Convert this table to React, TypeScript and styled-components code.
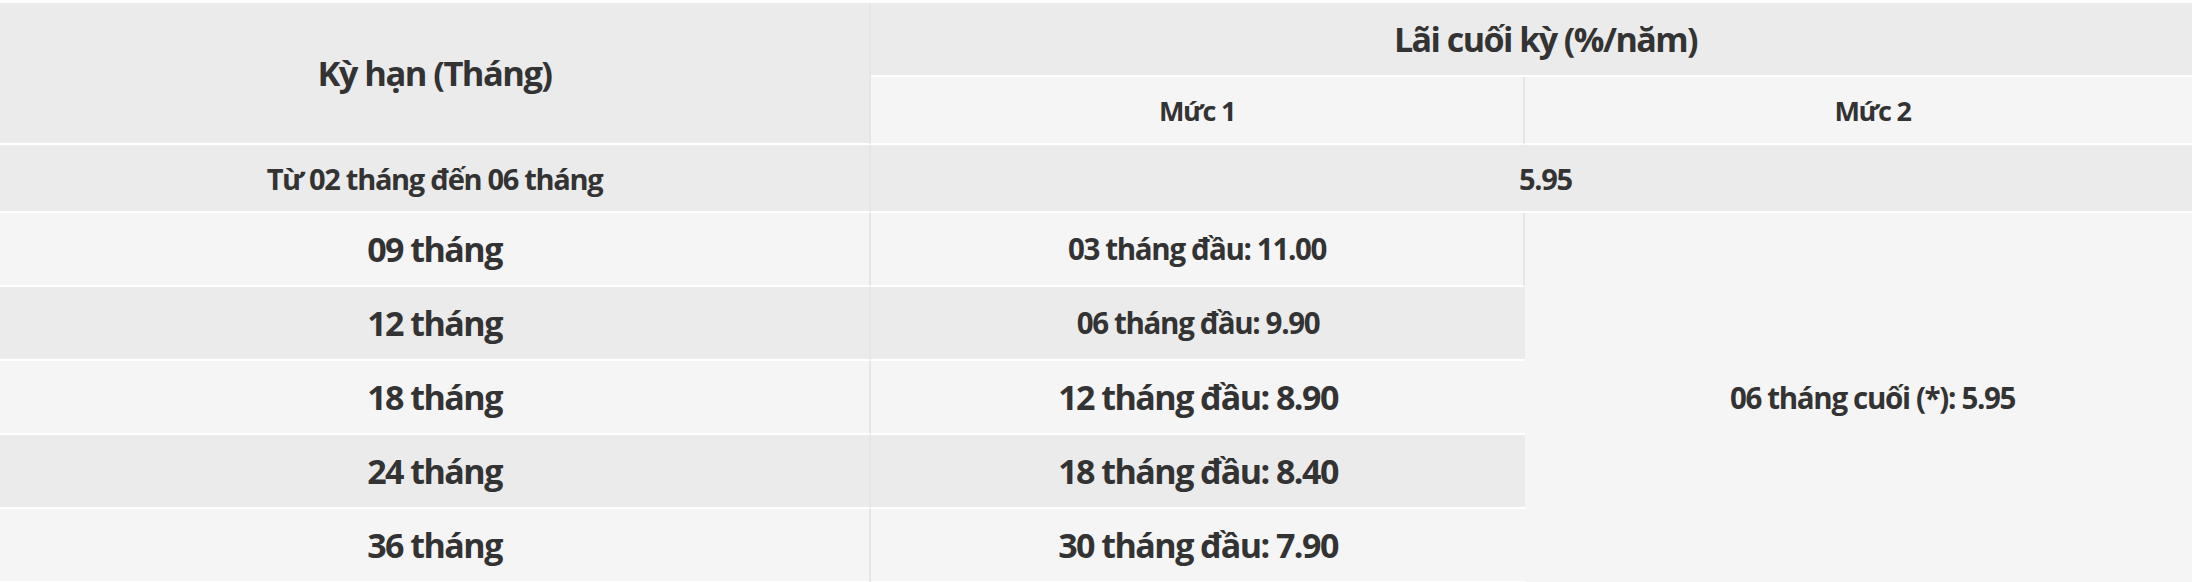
import * as React from "react";
import styled, { createGlobalStyle } from "styled-components";

const GlobalStyle = createGlobalStyle`
  html, body {
    margin: 0;
    padding: 0;
    background: #ffffff;
    overflow: hidden;
  }
  body {
    padding-top: 3px;
    font-family: "Open Sans", "Noto Sans", sans-serif;
    color: #333333;
  }
`;

const LIGHT = "#f5f5f5";
const DARK = "#ebebeb";
const RULE = "#e3e6ea";

const Frame = styled.div`
  width: 100%;
  overflow: hidden;
`;

const Table = styled.table`
  width: 2220px;
  border-collapse: separate;
  border-spacing: 0;
  table-layout: fixed;
`;

type CellProps = {
  $bg?: string;
  $h?: number;
  $size?: number;
  $weight?: number;
  $rule?: boolean;
  $noBottom?: boolean;
};

const Cell = styled.td<CellProps>`
  box-sizing: border-box;
  padding: 0;
  height: ${(p) => p.$h ?? 74}px;
  background: ${(p) => p.$bg ?? LIGHT};
  border-bottom: ${(p) => (p.$noBottom ? "none" : "2px solid #ffffff")};
  border-right: ${(p) => (p.$rule ? `2px solid ${RULE}` : "none")};
  text-align: center;
  vertical-align: middle;
  font-size: ${(p) => p.$size ?? 34}px;
  font-weight: ${(p) => p.$weight ?? 700};
  letter-spacing: -0.045em;
  line-height: 1;
  white-space: nowrap;
  color: #333333;
`;

const HeadCell = styled(Cell).attrs({ as: "th" })``;

type Row = { term: string; first: string };

const rows: Row[] = [
  { term: "09 tháng", first: "03 tháng đầu: 11.00" },
  { term: "12 tháng", first: "06 tháng đầu: 9.90" },
  { term: "18 tháng", first: "12 tháng đầu: 8.90" },
  { term: "24 tháng", first: "18 tháng đầu: 8.40" },
  { term: "36 tháng", first: "30 tháng đầu: 7.90" },
];

export default function App() {
  return (
    <>
      <GlobalStyle />
      <Frame>
        <Table>
          <colgroup>
            <col style={{ width: 871 }} />
            <col style={{ width: 654 }} />
            <col style={{ width: 695 }} />
          </colgroup>
          <thead>
            <tr>
              <HeadCell rowSpan={2} $bg={DARK} $h={142} $size={34.5} $rule>
                Kỳ hạn (Tháng)
              </HeadCell>
              <HeadCell colSpan={2} $bg={DARK} $h={74} $size={34}>
                Lãi cuối kỳ (%/năm)
              </HeadCell>
            </tr>
            <tr>
              <HeadCell $h={68} $size={27} $rule>
                Mức 1
              </HeadCell>
              <HeadCell $h={68} $size={27}>
                Mức 2
              </HeadCell>
            </tr>
          </thead>
          <tbody>
            <tr>
              <Cell $bg={DARK} $h={68} $size={29} $rule>
                Từ 02 tháng đến 06 tháng
              </Cell>
              <Cell $bg={DARK} $h={68} $size={29} colSpan={2}>
                5.95
              </Cell>
            </tr>
            {rows.map((r, i) => {
              const bg = i % 2 === 0 ? LIGHT : DARK;
              const small = i < 2;
              return (
                <tr key={r.term}>
                  <Cell $bg={bg} $rule>
                    {r.term}
                  </Cell>
                  <Cell $bg={bg} $size={small ? 29.5 : 34} $rule={i === 0}>
                    {r.first}
                  </Cell>
                  {i === 0 && (
                    <Cell rowSpan={5} $bg={LIGHT} $size={29.5} $noBottom>
                      06 tháng cuối (*): 5.95
                    </Cell>
                  )}
                </tr>
              );
            })}
          </tbody>
        </Table>
      </Frame>
    </>
  );
}
